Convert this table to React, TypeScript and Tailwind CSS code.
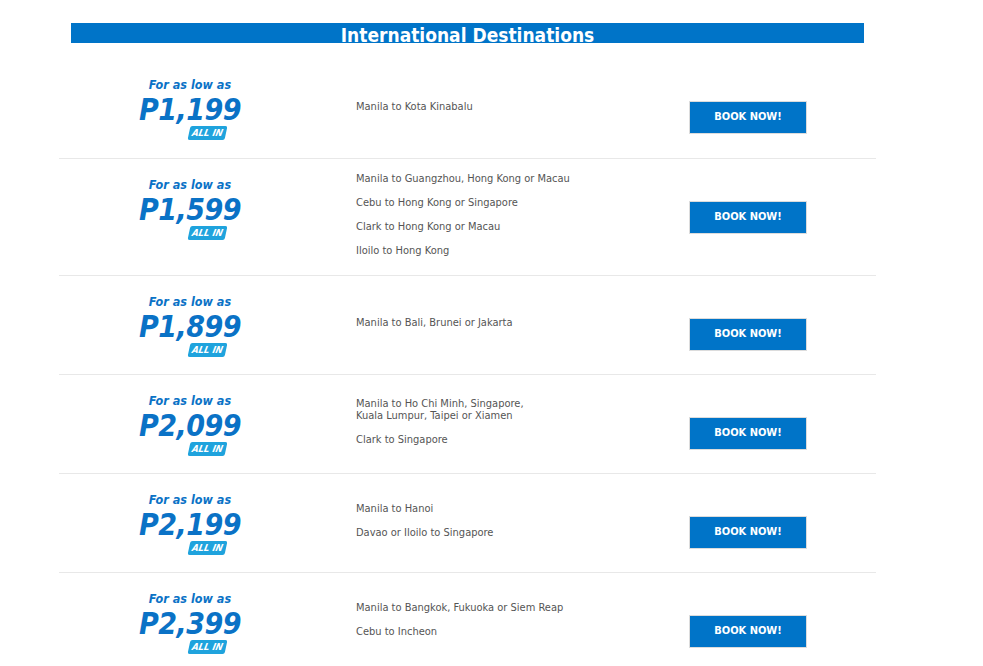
import React from 'react';

interface Deal {
  price: string;
  routes: string[][];
}

const deals: Deal[] = [
  { price: 'P1,199', routes: [['Manila to Kota Kinabalu']] },
  {
    price: 'P1,599',
    routes: [
      ['Manila to Guangzhou, Hong Kong or Macau'],
      ['Cebu to Hong Kong or Singapore'],
      ['Clark to Hong Kong or Macau'],
      ['Iloilo to Hong Kong'],
    ],
  },
  { price: 'P1,899', routes: [['Manila to Bali, Brunei or Jakarta']] },
  {
    price: 'P2,099',
    routes: [
      ['Manila to Ho Chi Minh, Singapore,', 'Kuala Lumpur, Taipei or Xiamen'],
      ['Clark to Singapore'],
    ],
  },
  {
    price: 'P2,199',
    routes: [['Manila to Hanoi'], ['Davao or Iloilo to Singapore']],
  },
  {
    price: 'P2,399',
    routes: [['Manila to Bangkok, Fukuoka or Siem Reap'], ['Cebu to Incheon']],
  },
];

const PriceTag: React.FC<{ price: string }> = ({ price }) => (
  <div className="flex flex-col items-center pt-[19px]">
    <span className="text-[12.5px] leading-[14px] font-bold italic text-[#0a72c6]">
      For as low as
    </span>
    <span className="mt-[4px] text-[30px] leading-[28px] font-bold italic tracking-[-0.5px] text-[#0a72c6]">
      {price}
    </span>
    <span className="mt-[2px] ml-[34px] flex h-[14px] w-[37px] -skew-x-12 items-center justify-center rounded-[2px] bg-[#1fa3dd]">
      <span className="text-[9.5px] leading-none font-bold italic text-white">
        ALL IN
      </span>
    </span>
  </div>
);

const DealRow: React.FC<{ deal: Deal; first?: boolean }> = ({ deal, first }) => (
  <div
    className={
      first
        ? 'flex min-h-[99px]'
        : 'flex min-h-[99px] border-t border-[#e8e8e8]'
    }
  >
    <div className="w-[262px] shrink-0 pb-[17px]">
      <PriceTag price={deal.price} />
    </div>
    <div className="flex w-[299px] shrink-0 flex-col justify-center pt-[14px] pb-[6px] pl-[35px]">
      {deal.routes.map((lines, i) => (
        <p key={i} className="mb-[12px] text-[11px] leading-[12px] text-[#555555]">
          {lines.map((l, j) => (
            <span key={j} className="block">
              {l}
            </span>
          ))}
        </p>
      ))}
    </div>
    <div className="flex flex-1 justify-center pt-[42px]">
      <button className="h-[33px] w-[118px] border border-[#dcdcdc] bg-[#0074c8] text-[11px] font-bold text-white">
        BOOK NOW!
      </button>
    </div>
  </div>
);

export default function App() {
  return (
    <div
      className="min-h-screen bg-white pt-[23px]"
      style={{ fontFamily: '"DejaVu Sans Condensed", Tahoma, "DejaVu Sans", sans-serif' }}
    >
      <div className="ml-[59px] w-[817px]">
        <div className="mx-[12px] flex h-[20px] items-center justify-center overflow-visible bg-[#0074c8]">
          <h1 className="mt-[4px] text-[19px] leading-none font-bold text-white">
            International Destinations
          </h1>
        </div>
        <div className="mt-[16px]">
          {deals.map((d, i) => (
            <DealRow key={d.price} deal={d} first={i === 0} />
          ))}
        </div>
      </div>
    </div>
  );
}
